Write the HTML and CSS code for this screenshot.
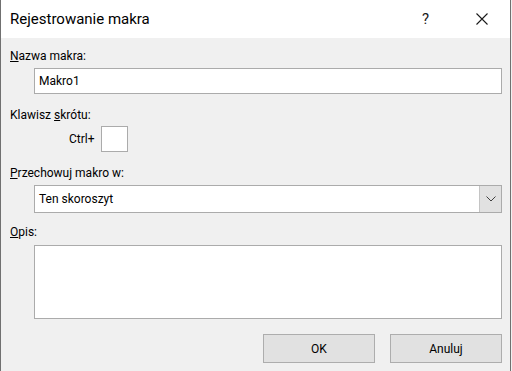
FILE: index.html
```html
<!DOCTYPE html>
<html lang="pl">
<head>
    <meta charset="UTF-8">
    <meta name="viewport" content="width=device-width, initial-scale=1.0">
    <title>Rejestrowanie makra</title>
    <link rel="stylesheet" href="styles.css">
</head>
<body>
    <div class="dialog">
        <div class="title-bar">
            <span class="title">Rejestrowanie makra</span>
            <span class="help">?</span>
            <span class="close">
                <svg width="12" height="12" viewBox="0 0 12 12">
                    <path d="M0.5 0.5 L11.5 11.5 M11.5 0.5 L0.5 11.5" stroke="#1a1a1a" stroke-width="1.1" fill="none"/>
                </svg>
            </span>
        </div>

        <div class="content">
            <div class="label label-first"><u>N</u>azwa makra:</div>
            <div class="field text-box">Makro1</div>

            <div class="label label-gap">Klawisz <u>s</u>krótu:</div>
            <div class="shortcut-row">
                <span class="ctrl">Ctrl+</span>
                <div class="key-box"></div>
            </div>

            <div class="label label-gap"><u>P</u>rzechowuj makro w:</div>
            <div class="field select-box">
                <span class="select-value">Ten skoroszyt</span>
                <span class="select-button">
                    <svg width="10" height="6" viewBox="0 0 10 6">
                        <path d="M0.5 0.5 L5 5 L9.5 0.5" stroke="#404040" stroke-width="1" fill="none"/>
                    </svg>
                </span>
            </div>

            <div class="label label-gap-small"><u>O</u>pis:</div>
            <div class="field memo-box"></div>

            <div class="buttons">
                <div class="btn">OK</div>
                <div class="btn">Anuluj</div>
            </div>
        </div>
    </div>
</body>
</html>
```

FILE: styles.css
```css
body {
    margin: 0;
    background: #f0f0f0;
    font-family: Roboto, 'Noto Sans', sans-serif;
    color: #000000;
    overflow: hidden;
}

.dialog {
    box-sizing: border-box;
    width: 511px;
    height: 371px;
    background: #f0f0f0;
    border-left: 1px solid #707070;
    border-right: 1px solid #707070;
}

.title-bar {
    height: 38px;
    background: #ffffff;
    display: flex;
    align-items: center;
}

.title {
    font-size: 15px;
    padding-left: 9px;
    flex: 1;
}

.help {
    font-size: 15px;
    color: #1a1a1a;
    margin-right: 47px;
}

.close {
    display: flex;
    margin-right: 22px;
}

.content {
    padding: 0 8px 0 9px;
    font-size: 12px;
    line-height: 16px;
}

.label-first {
    margin-top: 10px;
}

.label-gap {
    margin-top: 13px;
}

.label-gap-small {
    margin-top: 11px;
}

.field {
    box-sizing: border-box;
    margin-left: 24px;
    background: #ffffff;
    border: 1px solid #ababab;
}

.text-box {
    height: 26px;
    margin-top: 4px;
    padding-left: 4px;
    display: flex;
    align-items: center;
}

.shortcut-row {
    display: flex;
    align-items: center;
    margin-top: 3px;
    padding-left: 59px;
    gap: 6px;
}

.key-box {
    box-sizing: border-box;
    width: 27px;
    height: 26px;
    background: #ffffff;
    border: 1px solid #ababab;
}

.select-box {
    height: 28px;
    margin-top: 4px;
    display: flex;
    align-items: stretch;
}

.select-value {
    flex: 1;
    padding-left: 4px;
    display: flex;
    align-items: center;
}

.select-button {
    width: 21px;
    background: #e1e1e1;
    border-left: 1px solid #c4c4c4;
    display: flex;
    align-items: center;
    justify-content: center;
}

.memo-box {
    height: 74px;
    margin-top: 5px;
}

.buttons {
    display: flex;
    justify-content: flex-end;
    gap: 15px;
    margin-top: 15px;
}

.btn {
    box-sizing: border-box;
    width: 112px;
    height: 29px;
    background: #e1e1e1;
    border: 1px solid #adadad;
    display: flex;
    align-items: center;
    justify-content: center;
}
```
